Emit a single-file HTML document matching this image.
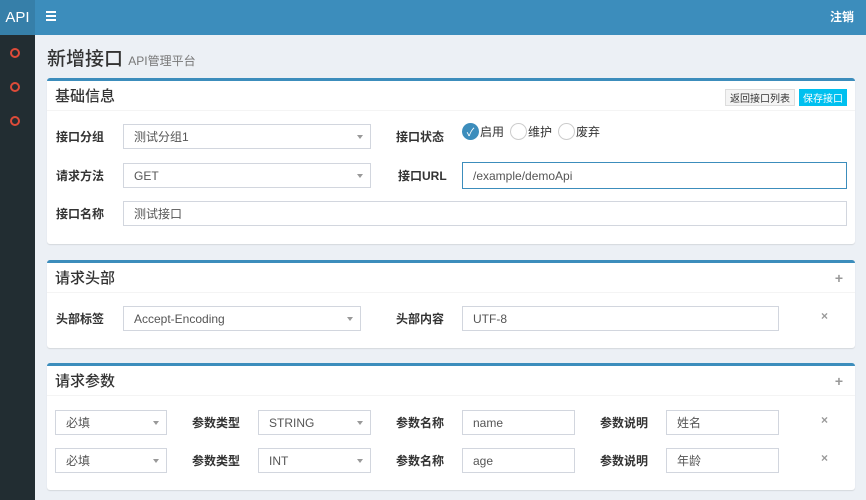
<!DOCTYPE html><html><head><meta charset="utf-8"><style>
*{box-sizing:border-box;margin:0;padding:0}
body{width:866px;height:500px;overflow:hidden;background:#ecf0f5;font-family:"Liberation Sans","Noto Sans CJK SC",sans-serif;font-size:12px;color:#333;position:relative}
.a{position:absolute}
.top{left:0;top:0;width:866px;height:35px;background:#3c8dbc}
.logo{left:0;top:0;width:35px;height:35px;background:#367fa9;color:#fff;font-size:15px;display:flex;align-items:center;justify-content:center}
.side{left:0;top:35px;width:35px;height:465px;background:#222d32}
.dot{left:10px;width:10px;height:10px;border:2px solid #dd4b39;border-radius:50%}
.box{left:47px;width:808px;background:#fff;border-top:3px solid #3c8dbc;border-radius:3px;box-shadow:0 1px 1px rgba(0,0,0,.1)}
.hd{position:absolute;left:0;top:0;width:100%;height:30px;border-bottom:1px solid #f4f4f4;font-size:15px;display:flex;align-items:center;padding-left:8px;color:#333;font-weight:500}
.lb{position:absolute;font-weight:bold;font-size:12px;height:25px;display:flex;align-items:center;color:#333}
.in{position:absolute;height:25px;border:1px solid #d2d6de;background:#fff;display:flex;align-items:center;padding-left:10px;font-size:12px;color:#555}
.sel::after{content:"";position:absolute;right:7px;top:10px;border-left:3px solid transparent;border-right:3px solid transparent;border-top:4px solid #999}
.plus{position:absolute;right:12px;color:#999;font-size:14px;font-weight:bold}
.x{position:absolute;color:#999;font-size:12px;font-weight:bold}
.rad{position:absolute;width:17px;height:17px;border:1px solid #ccc;border-radius:50%;background:#fff}
.t{position:absolute;height:17px;display:flex;align-items:center}
</style></head><body>
<div class="a top"></div>
<div class="a logo">API</div>
<div class="a" style="left:46px;top:11px;width:10px;height:2px;background:#fff;box-shadow:0 4px 0 #fff,0 8px 0 #fff"></div>
<div class="a" style="right:12px;top:8px;color:#fff;font-size:12px;font-weight:bold">注销</div>
<div class="a side"></div>
<div class="a dot" style="top:48px"></div>
<div class="a dot" style="top:82px"></div>
<div class="a dot" style="top:116px"></div>
<div class="a" style="left:47px;top:44px;font-size:19px;color:#333;font-weight:500">新增接口 <span style="font-size:12px;color:#777;font-weight:normal">API管理平台</span></div>

<div class="a box" style="top:78px;height:166px">
 <div class="hd">基础信息</div>
 <div class="a" style="right:60px;top:8px;height:17px;padding:0 4px;background:#f4f4f4;border:1px solid #ddd;font-size:10px;display:flex;align-items:center">返回接口列表</div>
 <div class="a" style="right:8px;top:8px;height:17px;padding:0 4px;background:#00c0ef;color:#fff;font-size:10px;display:flex;align-items:center">保存接口</div>
 <div class="lb" style="left:9px;top:43px">接口分组</div>
 <div class="in sel" style="left:76px;top:43px;width:248px">测试分组1</div>
 <div class="lb" style="left:349px;top:43px">接口状态</div>
 <div class="rad" style="left:415px;top:42px;background:#3c8dbc;border-color:#3c8dbc;color:#fff;font-size:11px;display:flex;align-items:center;justify-content:center">✓</div>
 <div class="t" style="left:433px;top:42px">启用</div>
 <div class="rad" style="left:463px;top:42px"></div>
 <div class="t" style="left:481px;top:42px">维护</div>
 <div class="rad" style="left:511px;top:42px"></div>
 <div class="t" style="left:529px;top:42px">废弃</div>
 <div class="lb" style="left:9px;top:82px">请求方法</div>
 <div class="in sel" style="left:76px;top:82px;width:248px">GET</div>
 <div class="lb" style="left:351px;top:82px">接口URL</div>
 <div class="in" style="left:415px;top:81px;width:385px;height:27px;border-color:#3c8dbc">/example/demoApi</div>
 <div class="lb" style="left:9px;top:120px">接口名称</div>
 <div class="in" style="left:76px;top:120px;width:724px">测试接口</div>
</div>

<div class="a box" style="top:260px;height:88px">
 <div class="hd">请求头部</div><div class="plus" style="top:7px">+</div>
 <div class="lb" style="left:9px;top:43px">头部标签</div>
 <div class="in sel" style="left:76px;top:43px;width:238px">Accept-Encoding</div>
 <div class="lb" style="left:349px;top:43px">头部内容</div>
 <div class="in" style="left:415px;top:43px;width:317px">UTF-8</div>
 <div class="x" style="left:774px;top:46px">×</div>
</div>

<div class="a box" style="top:363px;height:127px">
 <div class="hd">请求参数</div><div class="plus" style="top:7px">+</div>
 <div class="in sel" style="left:8px;top:44px;width:112px">必填</div>
 <div class="lb" style="left:145px;top:44px">参数类型</div>
 <div class="in sel" style="left:211px;top:44px;width:113px">STRING</div>
 <div class="lb" style="left:349px;top:44px">参数名称</div>
 <div class="in" style="left:415px;top:44px;width:113px">name</div>
 <div class="lb" style="left:553px;top:44px">参数说明</div>
 <div class="in" style="left:619px;top:44px;width:113px">姓名</div>
 <div class="x" style="left:774px;top:47px">×</div>
 <div class="in sel" style="left:8px;top:82px;width:112px">必填</div>
 <div class="lb" style="left:145px;top:82px">参数类型</div>
 <div class="in sel" style="left:211px;top:82px;width:113px">INT</div>
 <div class="lb" style="left:349px;top:82px">参数名称</div>
 <div class="in" style="left:415px;top:82px;width:113px">age</div>
 <div class="lb" style="left:553px;top:82px">参数说明</div>
 <div class="in" style="left:619px;top:82px;width:113px">年龄</div>
 <div class="x" style="left:774px;top:85px">×</div>
</div>
</body></html>
